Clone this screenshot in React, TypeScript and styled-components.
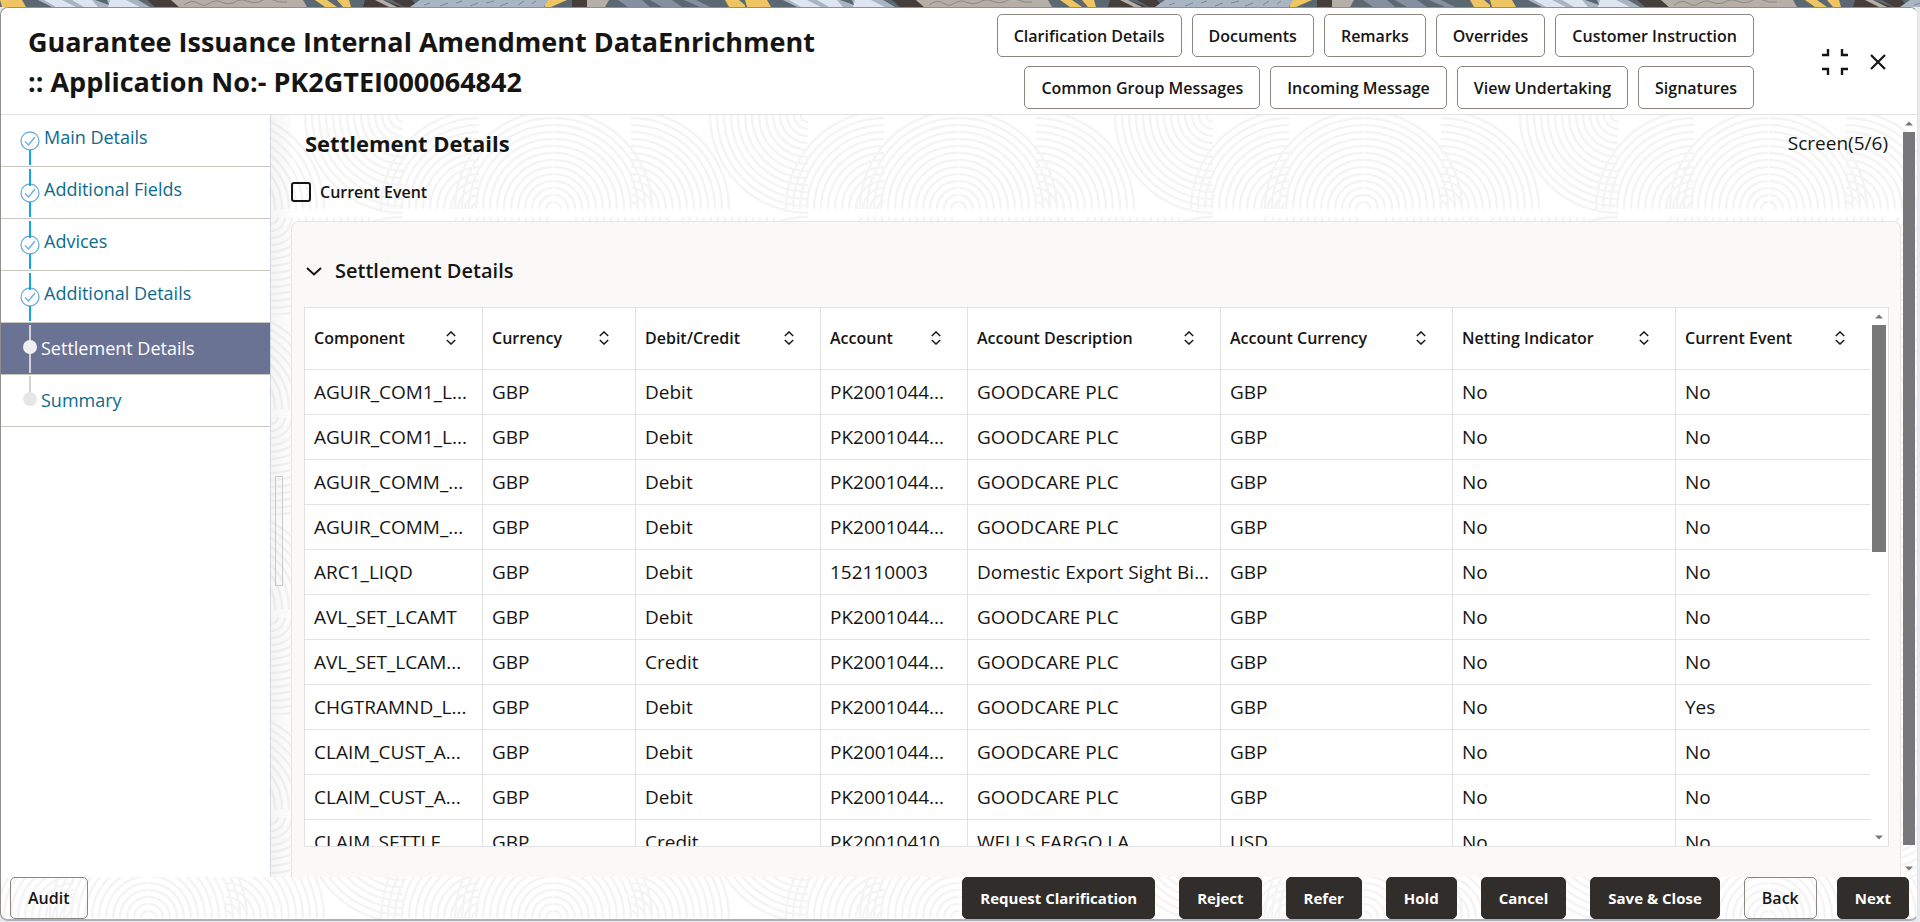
import React, { useState } from "react";
import styled, { createGlobalStyle, css } from "styled-components";

const GlobalStyle = createGlobalStyle`
  *, *::before, *::after { box-sizing: border-box; }
  html, body { margin: 0; padding: 0; }
  body {
    font-family: "Open Sans", "Noto Sans", sans-serif;
    font-size: 18px;
    line-height: 24px;
    color: #161513;
    background: #e6e9ee;
  }
  button, input { font-family: inherit; }
`;

const Screen = styled.div`
  height: 100vh;
  min-height: 600px;
  display: flex;
  flex-direction: column;
  overflow: hidden;
`;

const BannerArt = styled.svg`
  display: block;
  flex: none;
  width: 100%;
  height: 7px;
`;

const Dialog = styled.section`
  flex: 1;
  min-height: 0;
  margin: 0 2px 1px 0;
  display: flex;
  flex-direction: column;
  overflow: hidden;
  background: #ffffff;
  border: 1px solid #8f8f8f;
  border-right-color: #e4e4e4;
  border-bottom: 2px solid #aab1ba;
  border-radius: 8px;
`;

const ArcArt = styled.svg`
  position: absolute;
  inset: 0;
  z-index: -1;
  width: 100%;
  height: 100%;
`;

const Header = styled.header`
  flex: none;
  display: flex;
  align-items: center;
  padding: 6px 31px 5px 27px;
  background: #ffffff;
  border-bottom: 1px solid #e0e0e0;
`;

const Title = styled.h1`
  flex: 1;
  margin: 0;
  max-width: 800px;
  font-size: 27px;
  line-height: 40px;
  font-weight: 700;
`;

const HeaderActions = styled.div`
  display: flex;
  flex-wrap: wrap;
  justify-content: flex-end;
  gap: 9px 10px;
  width: 780px;
  margin-left: auto;
`;

const Button = styled.button<{ $solid?: boolean; $header?: boolean }>`
  height: ${(p) => (p.$header ? 43 : 42)}px;
  padding: 0 ${(p) => (p.$header ? 16 : 17)}px;
  border: 1px solid #8b8580;
  border-radius: 5px;
  background: ${(p) => (p.$header ? "#ffffff" : "transparent")};
  color: #161513;
  font-size: 16px;
  line-height: 24px;
  font-weight: 600;
  white-space: nowrap;
  cursor: pointer;
  ${(p) =>
    p.$solid &&
    css`
      background: #312d2a;
      border-color: #312d2a;
      color: #ffffff;
      font-size: 15px;
      font-weight: 700;
    `}
`;

const WindowControls = styled.div`
  display: flex;
  align-items: center;
  gap: 22px;
  margin-left: 68px;
`;

const IconButton = styled.button`
  display: flex;
  padding: 0;
  border: 0;
  background: none;
  color: #161513;
  cursor: pointer;
`;

const Body = styled.div`
  position: relative;
  isolation: isolate;
  flex: 1;
  min-height: 0;
  display: flex;
`;

const Sidebar = styled.nav`
  flex: none;
  width: 270px;
  background: #ffffff;
  border-right: 1px solid #cddae4;
`;

const StepList = styled.ol`
  list-style: none;
  margin: 0;
  padding: 0;
`;

const Step = styled.li<{ $active?: boolean }>`
  height: 52px;
  border-bottom: 1px solid #c9c5bf;
  background: ${(p) => (p.$active ? "#6b7394" : "transparent")};
`;

const StepLink = styled.a<{ $active?: boolean; $done?: boolean }>`
  display: flex;
  height: 51px;
  padding-left: 18px;
  gap: ${(p) => (p.$done ? 3 : 0)}px;
  color: ${(p) => (p.$active ? "#ffffff" : "#0c6b8d")};
  font-size: 18px;
  line-height: ${(p) => (p.$done ? 44 : 50)}px;
  text-decoration: none;
`;

const Splitter = styled.div`
  flex: none;
  width: 20px;
  display: flex;
  align-items: center;
  padding: 70px 0 0 4px;
  background: linear-gradient(to right, rgba(60, 60, 60, 0.05), rgba(60, 60, 60, 0.01));
`;

const SplitterGrip = styled.div`
  width: 8px;
  height: 110px;
  border: 1px solid #c9c9c9;
`;

const Main = styled.main`
  flex: 1;
  min-width: 0;
  display: flex;
  flex-direction: column;
`;

const MainHeader = styled.div`
  flex: none;
  display: flex;
  justify-content: space-between;
  align-items: center;
  padding: 12px 13px 0 14px;
`;

const PageTitle = styled.h2`
  margin: 0;
  font-size: 22px;
  line-height: 32px;
  font-weight: 700;
`;

const ScreenCount = styled.span`
  font-size: 19px;
  line-height: 28px;
`;

const CheckRow = styled.div`
  flex: none;
  display: flex;
  align-items: center;
  gap: 9px;
  margin: 21px 0 17px;
`;

const Checkbox = styled.input`
  appearance: none;
  width: 20px;
  height: 20px;
  margin: 0;
  border: 2px solid #161513;
  border-radius: 3px;
  background: transparent;
  &:checked {
    background: #161513;
    box-shadow: inset 0 0 0 3px #ffffff;
  }
`;

const CheckLabel = styled.label`
  font-size: 16px;
  line-height: 24px;
  font-weight: 600;
`;

const Card = styled.section`
  flex: 1;
  min-height: 0;
  display: flex;
  flex-direction: column;
  padding: 0 11px 30px 12px;
  background: #faf9f8;
  border: 1px solid #e6e5e3;
  border-bottom: 0;
  border-radius: 8px 8px 0 0;
`;

const CardToggle = styled.button`
  flex: none;
  display: flex;
  align-items: center;
  gap: 13px;
  margin: 33px 0 20px;
  padding: 0 0 0 2px;
  border: 0;
  background: none;
  color: #161513;
  font-size: 20px;
  line-height: 32px;
  font-weight: 600;
  text-align: left;
`;

const GridFrame = styled.div`
  flex: 1;
  min-height: 0;
  display: flex;
  background: #ffffff;
  border: 1px solid #e2e2e2;
`;

const GridViewport = styled.div`
  flex: 1;
  min-width: 0;
  overflow: hidden;
`;

const DataTable = styled.table`
  width: 100%;
  table-layout: fixed;
  border-collapse: separate;
  border-spacing: 0;
`;

const Th = styled.th`
  height: 62px;
  padding: 0 26px 2px 9px;
  border-right: 1px solid #e2e2e2;
  border-bottom: 1px solid #e2e2e2;
  font-size: 16px;
  line-height: 24px;
  font-weight: 600;
  text-align: left;
  white-space: nowrap;
  &:last-child { border-right: 0; }
`;

const ThContent = styled.div`
  display: flex;
  align-items: center;
  justify-content: space-between;
`;

const Td = styled.td`
  height: 45px;
  padding: 0 9px;
  border-right: 1px solid #e2e2e2;
  border-bottom: 1px solid #e2e2e2;
  font-size: 19px;
  line-height: 24px;
  white-space: nowrap;
  &:last-child { border-right: 0; }
`;

const Scroll = styled.div<{ $outer?: boolean }>`
  flex: none;
  display: flex;
  flex-direction: column;
  align-items: center;
  width: ${(p) => (p.$outer ? 16 : 18)}px;
  padding: 6px 0;
`;

const ScrollTrack = styled.div<{ $outer?: boolean }>`
  flex: 1;
  width: 100%;
  margin: 6px 0 ${(p) => (p.$outer ? 21 : 6)}px;
`;

const ScrollThumb = styled.div<{ $size: number; $width: number }>`
  width: ${(p) => p.$width}px;
  height: ${(p) => p.$size}%;
  margin: 0 auto;
  background: #787878;
`;

const Footer = styled.footer`
  position: relative;
  isolation: isolate;
  flex: none;
  display: flex;
  gap: 24px;
  padding: 0 8px 0 9px;
  overflow: hidden;
`;

const FooterSpacer = styled.div`
  flex: 1;
`;

const StepButtons = styled.div`
  display: flex;
  gap: 20px;
`;

const headerActions = [
  "Clarification Details",
  "Documents",
  "Remarks",
  "Overrides",
  "Customer Instruction",
  "Common Group Messages",
  "Incoming Message",
  "View Undertaking",
  "Signatures",
];

const steps: { label: string; state: "done" | "active" | "next" }[] = [
  { label: "Main Details", state: "done" },
  { label: "Additional Fields", state: "done" },
  { label: "Advices", state: "done" },
  { label: "Additional Details", state: "done" },
  { label: "Settlement Details", state: "active" },
  { label: "Summary", state: "next" },
];

const columns: [string, number][] = [
  ["Component", 178],
  ["Currency", 153],
  ["Debit/Credit", 185],
  ["Account", 147],
  ["Account Description", 253],
  ["Account Currency", 232],
  ["Netting Indicator", 223],
  ["Current Event", 195],
];

const rows: string[][] = [
  ["AGUIR_COM1_L...", "GBP", "Debit", "PK2001044...", "GOODCARE PLC", "GBP", "No", "No"],
  ["AGUIR_COM1_L...", "GBP", "Debit", "PK2001044...", "GOODCARE PLC", "GBP", "No", "No"],
  ["AGUIR_COMM_...", "GBP", "Debit", "PK2001044...", "GOODCARE PLC", "GBP", "No", "No"],
  ["AGUIR_COMM_...", "GBP", "Debit", "PK2001044...", "GOODCARE PLC", "GBP", "No", "No"],
  ["ARC1_LIQD", "GBP", "Debit", "152110003", "Domestic Export Sight Bi...", "GBP", "No", "No"],
  ["AVL_SET_LCAMT", "GBP", "Debit", "PK2001044...", "GOODCARE PLC", "GBP", "No", "No"],
  ["AVL_SET_LCAM...", "GBP", "Credit", "PK2001044...", "GOODCARE PLC", "GBP", "No", "No"],
  ["CHGTRAMND_L...", "GBP", "Debit", "PK2001044...", "GOODCARE PLC", "GBP", "No", "Yes"],
  ["CLAIM_CUST_A...", "GBP", "Debit", "PK2001044...", "GOODCARE PLC", "GBP", "No", "No"],
  ["CLAIM_CUST_A...", "GBP", "Debit", "PK2001044...", "GOODCARE PLC", "GBP", "No", "No"],
  ["CLAIM_SETTLE...", "GBP", "Credit", "PK20010410", "WELLS FARGO LA", "USD", "No", "No"],
];

const footerActions = ["Request Clarification", "Reject", "Refer", "Hold", "Cancel", "Save & Close"];

function Banner() {
  return (
    <BannerArt aria-hidden="true">
      <defs>
        <pattern id="weave" width="745" height="7" patternUnits="userSpaceOnUse">
          <rect width="745" height="7" fill="#5b6872" />
          <path d="M0 0h14l8 7H2z M14 0h8l4 7h-5z M315 0h12l10 7h-12z M337 0h12l2 7h-8z M545 0h22l-16 7h-6z M725 0h14l6 5v2h-16z" fill="#efc462" />
          <path d="M38 0h100l12 7H52z" fill="#aab3c0" />
          <path d="M44 0h18l14 7H56z M72 0h20l6 7H84z M110 0h16l14 7h-32z" fill="#dde5f1" />
          <path d="M95 0h12l2 5z" fill="#566873" />
          <path d="M147 0h24l8 7h-24z M365 0h18l20 7h-40z M392 0h20l6 7h-14z M572 0h15v7h-15z" fill="#453e3a" />
          <path d="M171 0h132l4 7H179z M587 0h22l-4 7h-18z M375 0h8l14 7h-8z" fill="#b5afa8" />
          <path d="M184 5q8-6 14-2t10 1q8-5 13-2t12 1q7-5 14-2t12 1q8-5 14-2t14 2" fill="none" stroke="#8d8883" />
          <path d="M420 0h128l-4 7H410z" fill="#aab5c4" />
          <path d="M424 5l6-2M440 6l8-3M456 3l6-2M470 6l8-3M486 3l8-2M500 6l8-3M518 5l6-4M532 4l4-3" stroke="#7c8796" />
          <path d="M618 0h24l8 7h-22z M650 0h22l10 7h-20z M684 0h12l14 7h-10z" fill="#868f9f" />
        </pattern>
      </defs>
      <rect width="100%" height="7" fill="url(#weave)" />
    </BannerArt>
  );
}

const ring = (max: number, draw: (r: number) => string) => {
  const parts: string[] = [];
  for (let r = 7; r <= max; r += 7) parts.push(draw(r));
  return parts.join("");
};

const topLeft = (cx: number, cy: number) => ring(98, (r) => `M${cx - r} ${cy}A${r} ${r} 0 0 1 ${cx} ${cy - r}`);
const topRight = (cx: number, cy: number) => ring(98, (r) => `M${cx} ${cy - r}A${r} ${r} 0 0 1 ${cx + r} ${cy}`);
const bottomLeft = (cx: number, cy: number) => ring(98, (r) => `M${cx - r} ${cy}A${r} ${r} 0 0 0 ${cx} ${cy + r}`);
const bottomRight = (cx: number, cy: number) => ring(98, (r) => `M${cx} ${cy + r}A${r} ${r} 0 0 0 ${cx + r} ${cy}`);

function Arcs({ id, top }: { id: string; top: number }) {
  return (
    <ArcArt aria-hidden="true">
      <defs>
        <pattern id={id} x="148" y={top} width="405" height="200" patternUnits="userSpaceOnUse">
          <g fill="none" stroke="#f4f4f4" strokeWidth="2.500">
            <path d={topLeft(330, 94)} />
            <path d={topLeft(404, 94) + topRight(0, 94) + topRight(77, 94)} />
            <path d={bottomLeft(254, 0)} />
            <path d={bottomRight(300, 102) + bottomLeft(120, 102) + bottomRight(122, 102)} />
            <path d={topLeft(254, 200)} />
          </g>
        </pattern>
      </defs>
      <rect width="100%" height="100%" fill={`url(#${id})`} />
    </ArcArt>
  );
}

function StepMarker({ state, first }: { state: "done" | "active" | "next"; first: boolean }) {
  if (state === "done") {
    return (
      <svg width="22" height="51" viewBox="0 0 22 51" aria-hidden="true">
        <circle cx="11" cy="26" r="9" fill="#fff" stroke="#6cabdf" strokeWidth="1.300" />
        {!first && <path d="M11 2v17" stroke="#14a5de" strokeWidth="2" />}
        <path d="M6 26.500l3.500 3.500L16 22" fill="none" stroke="#6cabdf" strokeWidth="1.300" />
        <path d="M11 35v15" stroke="#14a5de" strokeWidth="2" />
      </svg>
    );
  }
  return (
    <svg width="22" height="51" viewBox="0 0 22 51" aria-hidden="true">
      <path d={state === "active" ? "M11 2v48" : "M11 1v18"} stroke="#d3d3d3" strokeWidth="2" />
      <circle cx="11" cy="24" r="7" fill={state === "active" ? "#f0f0f0" : "#e6e6e6"} />
    </svg>
  );
}

function SortIcon() {
  return (
    <svg width="10" height="14" viewBox="0 0 10 14" aria-hidden="true">
      <path d="M0.800 5L5 0.900L9.200 5M0.800 9L5 13.100L9.200 9" fill="none" stroke="#161513" strokeWidth="1.400" />
    </svg>
  );
}

function Arrow({ down }: { down?: boolean }) {
  return (
    <svg width="8" height="5" viewBox="0 0 8 5" aria-hidden="true">
      <path d={down ? "M0 0.500h8L4 4.500z" : "M0 4.500h8L4 0.500z"} fill="#787878" />
    </svg>
  );
}

function ScrollBar({ size, outer }: { size: number; outer?: boolean }) {
  return (
    <Scroll $outer={outer} aria-hidden="true">
      <Arrow />
      <ScrollTrack $outer={outer}>
        <ScrollThumb $size={size} $width={outer ? 12 : 14} />
      </ScrollTrack>
      <Arrow down />
    </Scroll>
  );
}

export default function App() {
  const [currentEvent, setCurrentEvent] = useState(false);

  return (
    <>
      <GlobalStyle />
      <Screen>
        <Banner />
        <Dialog>
          <Header>
            <Title>Guarantee Issuance Internal Amendment DataEnrichment :: Application No:- PK2GTEI000064842</Title>
            <HeaderActions>
              {headerActions.map((label) => (
                <Button key={label} type="button" $header>
                  {label}
                </Button>
              ))}
            </HeaderActions>
            <WindowControls>
              <IconButton type="button" aria-label="Collapse">
                <svg width="26" height="26" viewBox="0 0 26 26" aria-hidden="true">
                  <path d="M0 6h6V0M20 0v6h6M0 20h6v6M26 20h-6v6" fill="none" stroke="#161513" strokeWidth="2.400" />
                </svg>
              </IconButton>
              <IconButton type="button" aria-label="Close">
                <svg width="16" height="16" viewBox="0 0 16 16" aria-hidden="true">
                  <path d="M1 1l14 14M15 1L1 15" fill="none" stroke="#161513" strokeWidth="2.200" />
                </svg>
              </IconButton>
            </WindowControls>
          </Header>
          <Body>
            <Arcs id="body-arcs" top={0} />
            <Sidebar>
              <StepList>
                {steps.map((step, i) => (
                  <Step key={step.label} $active={step.state === "active"}>
                    <StepLink href="#" $active={step.state === "active"} $done={step.state === "done"}>
                      <StepMarker state={step.state} first={i === 0} />
                      {step.label}
                    </StepLink>
                  </Step>
                ))}
              </StepList>
            </Sidebar>
            <Splitter>
              <SplitterGrip />
            </Splitter>
            <Main>
              <MainHeader>
                <PageTitle>Settlement Details</PageTitle>
                <ScreenCount>Screen(5/6)</ScreenCount>
              </MainHeader>
              <CheckRow>
                <Checkbox
                  id="current-event"
                  type="checkbox"
                  checked={currentEvent}
                  onChange={(e) => setCurrentEvent(e.target.checked)}
                />
                <CheckLabel htmlFor="current-event">Current Event</CheckLabel>
              </CheckRow>
              <Card>
                <CardToggle type="button" aria-expanded="true">
                  <svg width="16" height="9" viewBox="0 0 16 9" aria-hidden="true">
                    <path d="M1 1l7 6.500L15 1" fill="none" stroke="#161513" strokeWidth="2" />
                  </svg>
                  Settlement Details
                </CardToggle>
                <GridFrame>
                  <GridViewport>
                    <DataTable>
                      <colgroup>
                        {columns.map(([label, width]) => (
                          <col key={label} width={width} />
                        ))}
                      </colgroup>
                      <thead>
                        <tr>
                          {columns.map(([label]) => (
                            <Th key={label} scope="col">
                              <ThContent>
                                {label}
                                <SortIcon />
                              </ThContent>
                            </Th>
                          ))}
                        </tr>
                      </thead>
                      <tbody>
                        {rows.map((row, i) => (
                          <tr key={i}>
                            {row.map((cell, j) => (
                              <Td key={j}>{cell}</Td>
                            ))}
                          </tr>
                        ))}
                      </tbody>
                    </DataTable>
                  </GridViewport>
                  <ScrollBar size={45} />
                </GridFrame>
              </Card>
            </Main>
            <ScrollBar size={100} outer />
          </Body>
          <Footer>
            <Arcs id="footer-arcs" top={-53} />
            <Button type="button">Audit</Button>
            <FooterSpacer />
            {footerActions.map((label) => (
              <Button key={label} type="button" $solid>
                {label}
              </Button>
            ))}
            <StepButtons>
              <Button type="button">Back</Button>
              <Button type="button" $solid>
                Next
              </Button>
            </StepButtons>
          </Footer>
        </Dialog>
      </Screen>
    </>
  );
}
